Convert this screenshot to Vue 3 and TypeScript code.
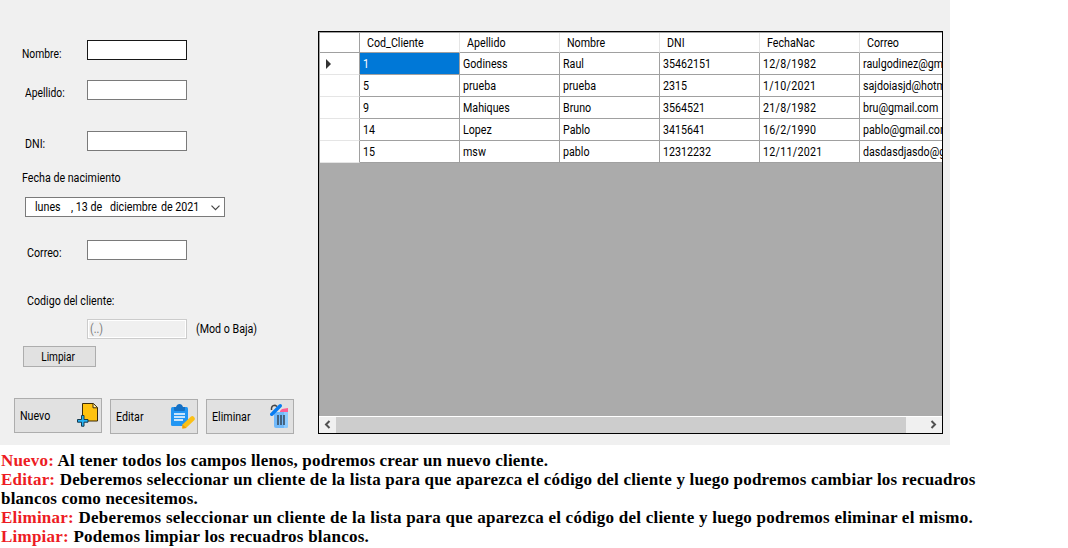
<script setup lang="ts">
import { ref } from 'vue'

interface Cliente {
  cod: number
  apellido: string
  nombre: string
  dni: string
  fechaNac: string
  correo: string
}

interface Nota {
  id: string
  accion: string
  lineas: string[]
}

const columnas = ['Cod_Cliente', 'Apellido', 'Nombre', 'DNI', 'FechaNac', 'Correo']

const clientes: Cliente[] = [
  { cod: 1, apellido: 'Godiness', nombre: 'Raul', dni: '35462151', fechaNac: '12/8/1982', correo: 'raulgodinez@gmail.com' },
  { cod: 5, apellido: 'prueba', nombre: 'prueba', dni: '2315', fechaNac: '1/10/2021', correo: 'sajdoiasjd@hotmail.com' },
  { cod: 9, apellido: 'Mahiques', nombre: 'Bruno', dni: '3564521', fechaNac: '21/8/1982', correo: 'bru@gmail.com' },
  { cod: 14, apellido: 'Lopez', nombre: 'Pablo', dni: '3415641', fechaNac: '16/2/1990', correo: 'pablo@gmail.com' },
  { cod: 15, apellido: 'msw', nombre: 'pablo', dni: '12312232', fechaNac: '12/11/2021', correo: 'dasdasdjasdo@gmail.com' },
]

const notas: Nota[] = [
  { id: 'nota-nuevo', accion: 'Nuevo:', lineas: ['Al tener todos los campos llenos, podremos crear un nuevo cliente.'] },
  {
    id: 'nota-editar',
    accion: 'Editar:',
    lineas: [
      'Deberemos seleccionar un cliente de la lista para que aparezca el código del cliente y luego podremos cambiar los recuadros',
      'blancos como necesitemos.',
    ],
  },
  { id: 'nota-eliminar', accion: 'Eliminar:', lineas: ['Deberemos seleccionar un cliente de la lista para que aparezca el código del cliente y luego podremos eliminar el mismo.'] },
  { id: 'nota-limpiar', accion: 'Limpiar:', lineas: ['Podemos limpiar los recuadros blancos.'] },
]

const seleccionado = ref(1)
const nombre = ref('')
const apellido = ref('')
const dni = ref('')
const correo = ref('')

function limpiar(): void {
  nombre.value = ''
  apellido.value = ''
  dni.value = ''
  correo.value = ''
}
</script>

<template>
  <main class="page">
    <section class="window">
      <form class="form" @submit.prevent>
        <div class="row row-nombre">
          <label for="nombre"><span class="t tight">Nombre:</span></label>
          <input id="nombre" v-model="nombre" class="box active" type="text" />
        </div>
        <div class="row row-apellido">
          <label for="apellido"><span class="t tight">Apellido:</span></label>
          <input id="apellido" v-model="apellido" class="box" type="text" />
        </div>
        <div class="row row-dni">
          <label for="dni"><span class="t">DNI:</span></label>
          <input id="dni" v-model="dni" class="box" type="text" />
        </div>
        <div class="label-fecha"><span class="t">Fecha de nacimiento</span></div>
        <div class="date">
          <span class="t dia">lunes</span>
          <span class="t num">, 13 de</span>
          <span class="t mes">diciembre</span>
          <span class="t anio">de 2021</span>
          <svg class="chevron" width="9" height="6" viewBox="0 0 9 6"><path d="M.5.7l4 4 4-4" fill="none" stroke="#444" stroke-width="1.200" /></svg>
        </div>
        <div class="row row-correo">
          <label for="correo"><span class="t">Correo:</span></label>
          <input id="correo" v-model="correo" class="box" type="text" />
        </div>
        <div class="label-codigo"><span class="t">Codigo del cliente:</span></div>
        <div class="codigo">
          <span class="box disabled"><span class="t">(..)</span></span>
          <span class="t">(Mod o Baja)</span>
        </div>
        <button class="btn limpiar" type="button" @click="limpiar"><span class="t centered">Limpiar</span></button>
        <div class="actions">
          <button class="btn action nuevo" type="button">
            <span class="t">Nuevo</span>
            <svg width="22" height="25" viewBox="0 0 22 25">
              <path d="M6.500.5h11l4 4v13.500h-15z" fill="#ffc20e" stroke="#3b2b0a" />
              <path d="M17 .8v4h4.200" fill="#fff0b0" stroke="#3b2b0a" />
              <path d="M5.500 12.500h2.500v4h4v2.700H8v4H5.500v-4h-4v-2.700h4z" fill="#25b4f5" stroke="#17384d" />
            </svg>
          </button>
          <button class="btn action editar" type="button">
            <span class="t">Editar</span>
            <svg width="25" height="25" viewBox="0 0 25 25">
              <rect x="1" y="3" width="17" height="19" rx="1.500" fill="#2196f3" />
              <path d="M4 3h2q1-3 3.500-3T13 3h2v3q0 1-1 1H5q-1 0-1-1z" fill="#1570c4" />
              <path d="M4 10h11M4 13h11M4 16h9" stroke="#fff" stroke-width="1.300" />
              <path d="M12.500 20.500l8.500-8q1.500-1 3 .5t.5 3l-8.500 8-4 .5z" fill="#fbc016" />
              <path d="M12.500 20.500l4 3.500-4 .5z" fill="#ee9c08" />
            </svg>
          </button>
          <button class="btn action eliminar" type="button">
            <span class="t">Eliminar</span>
            <svg width="19" height="25" viewBox="0 0 19 25">
              <path d="M1.500 6Q1 1.500 5 1.200L7 2.500" fill="none" stroke="#444" stroke-width="1.500" />
              <path d="M10 7l2-2 6-1v4h-8z" fill="#ff5c93" />
              <path d="M4 8h14v14q0 2-2 2H6q-2 0-2-2z" fill="#71b9fa" />
              <path d="M14 8h4v14q0 2-2 2h-2z" fill="#8dcbff" />
              <path d="M.2 9.500L9 .6q1.500-1 2.500 0t0 2.500L3 11.500q-1.500 1-2.500 0t-.3-2z" fill="#087cf0" />
              <path d="M8 11v10M11 11v10M14 11v10" stroke="#35475a" stroke-width="1.500" />
            </svg>
          </button>
        </div>
      </form>

      <div class="grid">
        <div class="grid-body">
          <div class="line head">
            <span class="rowhead"></span>
            <span v-for="c in columnas" :key="c" class="cell"><span class="t">{{ c }}</span></span>
          </div>
          <div v-for="c in clientes" :key="c.cod" class="line" @click="seleccionado = c.cod">
            <span class="rowhead">
              <svg v-if="seleccionado === c.cod" width="5" height="10" viewBox="0 0 5 10"><path d="M0 0l5 5-5 5z" fill="#333" /></svg>
            </span>
            <span class="cell" :class="{ selected: seleccionado === c.cod }"><span class="t">{{ c.cod }}</span></span>
            <span class="cell"><span class="t">{{ c.apellido }}</span></span>
            <span class="cell"><span class="t">{{ c.nombre }}</span></span>
            <span class="cell"><span class="t">{{ c.dni }}</span></span>
            <span class="cell"><span class="t fecha">{{ c.fechaNac }}</span></span>
            <span class="cell"><span class="t">{{ c.correo }}</span></span>
          </div>
        </div>
        <div class="scroll">
          <svg width="17" height="16" viewBox="0 0 17 16"><path d="M10.500 4L7 7.500l3.500 3.500" fill="none" stroke="#505050" stroke-width="2" /></svg>
          <span class="thumb"></span>
          <svg class="right" width="17" height="16" viewBox="0 0 17 16"><path d="M6.500 4L10 7.500l-3.500 3.500" fill="none" stroke="#505050" stroke-width="2" /></svg>
        </div>
      </div>
    </section>

    <section class="notes">
      <p v-for="n in notas" :key="n.id" :class="n.id">
        <span v-for="(l, i) in n.lineas" :key="i" class="note-line"><b v-if="i === 0">{{ n.accion }}</b>{{ i === 0 ? ' ' : '' }}{{ l }}</span>
      </p>
    </section>
  </main>
</template>

<style>
body {
  background: #fff;
  overflow: hidden;
}
</style>

<style scoped>
.page {
  width: 1068px;
  height: 548px;
  overflow: hidden;
  color: #000;
  font-family: Roboto, "Liberation Sans", sans-serif;
  font-size: 12px;
  line-height: 14px;
}
/* Narrow interface lettering */
.t {
  display: inline-block;
  flex: none;
  transform: scaleX(0.89);
  transform-origin: 0 50%;
  white-space: nowrap;
}
.t.tight {
  transform: scaleX(0.86);
}
.t.fecha {
  letter-spacing: 0.3px;
}
.t.centered {
  transform: scaleX(0.84);
  transform-origin: 50% 50%;
}
.window {
  display: flex;
  box-sizing: border-box;
  width: 950px;
  height: 445px;
  background: #f0f0f0;
}
.form {
  width: 318px;
  flex: none;
  padding-top: 40px;
}
.row {
  display: flex;
  height: 20px;
}
.row label {
  box-sizing: border-box;
  width: 87px;
  padding: 6px 0 0 25px;
}
.row-nombre label {
  padding: 7px 0 0 22px;
}
.row-apellido {
  margin-top: 20px;
}
.row-dni {
  margin-top: 31px;
}
.row-correo {
  margin-top: 23px;
}
.row-correo label {
  padding-left: 27px;
}
.box {
  box-sizing: border-box;
  width: 100px;
  height: 20px;
  margin: 0;
  padding: 2px;
  border: 1px solid #7a7a7a;
  border-radius: 0;
  outline: 0;
  background: #fff;
  font: inherit;
}
.box.active {
  border-color: #171717;
}
.box.disabled {
  border-color: #ccc;
  background: #f0f0f0;
  box-shadow: inset 0 0 0 1px #fff;
  color: #7b7b7b;
}
.label-fecha {
  height: 14px;
  margin: 20px 0 0 22px;
}
.date {
  display: flex;
  align-items: center;
  box-sizing: border-box;
  width: 200px;
  height: 20px;
  margin: 12px 0 0 25px;
  padding-left: 9px;
  border: 1px solid #7a7a7a;
  background: #fff;
}
.dia {
  width: 36px;
}
.num {
  width: 39px;
}
.mes {
  width: 51px;
}
.chevron {
  margin: 2px 4px 0 auto;
}
.label-codigo {
  height: 14px;
  margin: 34px 0 0 27px;
}
.codigo {
  display: flex;
  align-items: center;
  gap: 9px;
  height: 20px;
  margin: 11px 0 0 87px;
}
.btn {
  display: block;
  box-sizing: border-box;
  padding: 0;
  border: 1px solid #adadad;
  border-radius: 0;
  background: #e1e1e1;
  color: #000;
  font: inherit;
}
.limpiar {
  width: 73px;
  height: 21px;
  margin: 7px 0 0 23px;
  padding-right: 2px;
}
.actions {
  display: flex;
  gap: 8px;
  margin: 31px 0 0 14px;
}
.action {
  display: flex;
  align-items: center;
  justify-content: space-between;
  width: 88px;
  height: 35px;
  padding: 0 3px 0 5px;
}
.editar {
  margin-top: 1px;
  padding-right: 2px;
}
.eliminar {
  margin-top: 1px;
  padding-right: 4px;
}
.grid {
  display: flex;
  flex-direction: column;
  box-sizing: border-box;
  width: 625px;
  height: 403px;
  margin-top: 31px;
  border: 1px solid #000;
  background: #ababab;
}
.grid-body {
  flex: 1;
  overflow: hidden;
  border-top: 1px solid #a0a0a0;
  border-left: 1px solid #a0a0a0;
}
.line {
  display: flex;
  width: 640px;
  height: 22px;
}
.line.head {
  height: 20px;
}
.rowhead,
.cell {
  display: flex;
  align-items: center;
  box-sizing: border-box;
  flex: none;
  width: 100px;
  padding-left: 3px;
  border-right: 1px solid #a0a0a0;
  border-bottom: 1px solid #a0a0a0;
  background: #fff;
  white-space: nowrap;
}
.rowhead {
  width: 40px;
  padding-left: 6px;
  border-bottom-color: #e5e5e5;
}
.head .cell {
  padding-left: 7px;
  border-right-color: #e5e5e5;
}
.head .rowhead {
  border-bottom-color: #a0a0a0;
}
.cell.selected {
  background: #0078d7;
  color: #fff;
}
.scroll {
  display: flex;
  flex: none;
  height: 16px;
  border-top: 1px solid #fff;
  background: #f0f0f0;
}
.thumb {
  width: 570px;
  background: #cdcdcd;
}
.scroll .right {
  margin-left: auto;
}
.notes {
  padding: 6px 0 0 1px;
  font: bold 17px/19px "Liberation Serif", serif;
}
.notes p {
  margin: 0;
  letter-spacing: 0.235px;
}
.notes .nota-nuevo {
  letter-spacing: 0.17px;
}
.notes .nota-editar {
  letter-spacing: 0.19px;
}
.note-line {
  display: block;
  white-space: nowrap;
}
.notes b {
  color: #ed1c24;
}
</style>
